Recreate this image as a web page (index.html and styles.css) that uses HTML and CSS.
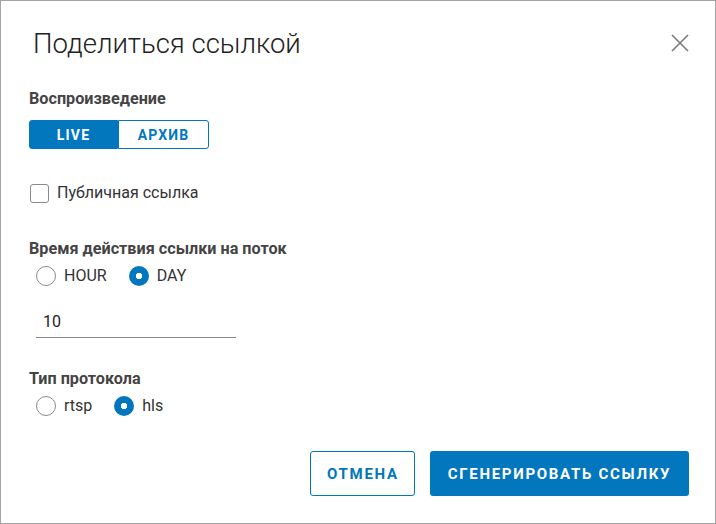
FILE: index.html
```html
<!DOCTYPE html>
<html lang="ru">
<head>
    <meta charset="UTF-8">
    <title>Поделиться ссылкой</title>
    <link rel="stylesheet" href="styles.css">
</head>
<body>

<div class="dialog">
    <div class="dialog-header">
        <h1 class="dialog-title">Поделиться ссылкой</h1>
        <button class="close-btn" aria-label="Закрыть">
            <svg width="18" height="18" viewBox="0 0 18 18">
                <path d="M1 1 L17 17 M17 1 L1 17" stroke="#7a7a7a" stroke-width="1.6" fill="none"/>
            </svg>
        </button>
    </div>

    <div class="dialog-body">
        <div class="field-label">Воспроизведение</div>
        <div class="toggle-group">
            <button class="toggle active">LIVE</button>
            <button class="toggle">АРХИВ</button>
        </div>

        <label class="checkbox-row">
            <span class="checkbox"></span>
            <span>Публичная ссылка</span>
        </label>

        <div class="field-label label-time">Время действия ссылки на поток</div>
        <div class="radio-row">
            <label class="radio-item"><span class="radio"></span>HOUR</label>
            <label class="radio-item"><span class="radio checked"></span>DAY</label>
        </div>

        <div class="text-input">10</div>

        <div class="field-label label-protocol">Тип протокола</div>
        <div class="radio-row">
            <label class="radio-item"><span class="radio"></span>rtsp</label>
            <label class="radio-item"><span class="radio checked"></span>hls</label>
        </div>
    </div>

    <div class="dialog-actions">
        <button class="btn btn-outline">Отмена</button>
        <button class="btn btn-primary">Сгенерировать ссылку</button>
    </div>
</div>

</body>
</html>
```

FILE: styles.css
```css
body {
    margin: 0;
    font-family: 'Roboto', 'Liberation Sans', sans-serif;
    color: #333;
    background: #fff;
}

.dialog {
    width: 716px;
    height: 524px;
    box-sizing: border-box;
    border: 1px solid #a3a3a3;
    display: flex;
    flex-direction: column;
}

.dialog-header {
    display: flex;
    justify-content: space-between;
    align-items: center;
    padding: 24px 26px 0 32px;
    height: 36px;
}

.dialog-title {
    margin: 0;
    font-size: 27.5px;
    font-weight: 300;
    color: #222;
}

.close-btn {
    border: none;
    background: none;
    padding: 0;
    width: 18px;
    height: 18px;
    cursor: pointer;
}

.dialog-body {
    padding: 0 28px;
    display: flex;
    flex-direction: column;
    align-items: flex-start;
    font-size: 16px;
    line-height: 20px;
}

.field-label {
    font-size: 16.2px;
    font-weight: 700;
    color: #444;
    margin-top: 28px;
    line-height: 20px;
}

.toggle-group {
    display: flex;
    margin-top: 11px;
}

.toggle {
    height: 29px;
    width: 89px;
    border: 1px solid #0277bd;
    background: #fff;
    color: #0277bd;
    font-family: inherit;
    font-size: 14px;
    font-weight: 700;
    letter-spacing: 1.2px;
    padding: 0;
}

.toggle:first-child {
    border-radius: 3px 0 0 3px;
}

.toggle:last-child {
    border-radius: 0 3px 3px 0;
    width: 91px;
}

.toggle.active {
    background: #0277bd;
    color: #fff;
}

.checkbox-row {
    display: flex;
    align-items: center;
    gap: 8px;
    margin-top: 34px;
    height: 20px;
    color: #333;
}

.checkbox {
    width: 19px;
    height: 19px;
    box-sizing: border-box;
    border: 1px solid #8a8a8a;
    border-radius: 3px;
    margin-left: 1px;
}

.label-time {
    margin-top: 36px;
}

.radio-row {
    display: flex;
    gap: 22px;
    margin-top: 7px;
    margin-left: 7px;
    height: 20px;
}

.radio-item {
    display: flex;
    align-items: center;
    gap: 8px;
    color: #333;
}

.radio {
    width: 20px;
    height: 20px;
    box-sizing: border-box;
    border: 1px solid #8a8a8a;
    border-radius: 50%;
}

.radio.checked {
    border: none;
    background: radial-gradient(circle, #fff 0 3px, #0277bd 3.5px);
}

.text-input {
    width: 193px;
    margin-top: 26px;
    margin-left: 7px;
    padding: 0 0 5px 7px;
    border-bottom: 1px solid #8a8a8a;
    color: #222;
}

.label-protocol {
    margin-top: 31px;
}

.dialog-actions {
    display: flex;
    justify-content: flex-end;
    gap: 15px;
    margin-top: auto;
    padding: 0 26px 27px 0;
}

.btn {
    height: 45px;
    border-radius: 3px;
    font-family: inherit;
    font-size: 15px;
    font-weight: 700;
    letter-spacing: 1.7px;
    text-transform: uppercase;
    padding: 0 16px;
    cursor: pointer;
}

.btn-outline {
    width: 105px;
    background: #fff;
    color: #0277bd;
    border: 1px solid #0277bd;
}

.btn-primary {
    width: 259px;
    background: #0277bd;
    color: #fff;
    border: none;
}
```
